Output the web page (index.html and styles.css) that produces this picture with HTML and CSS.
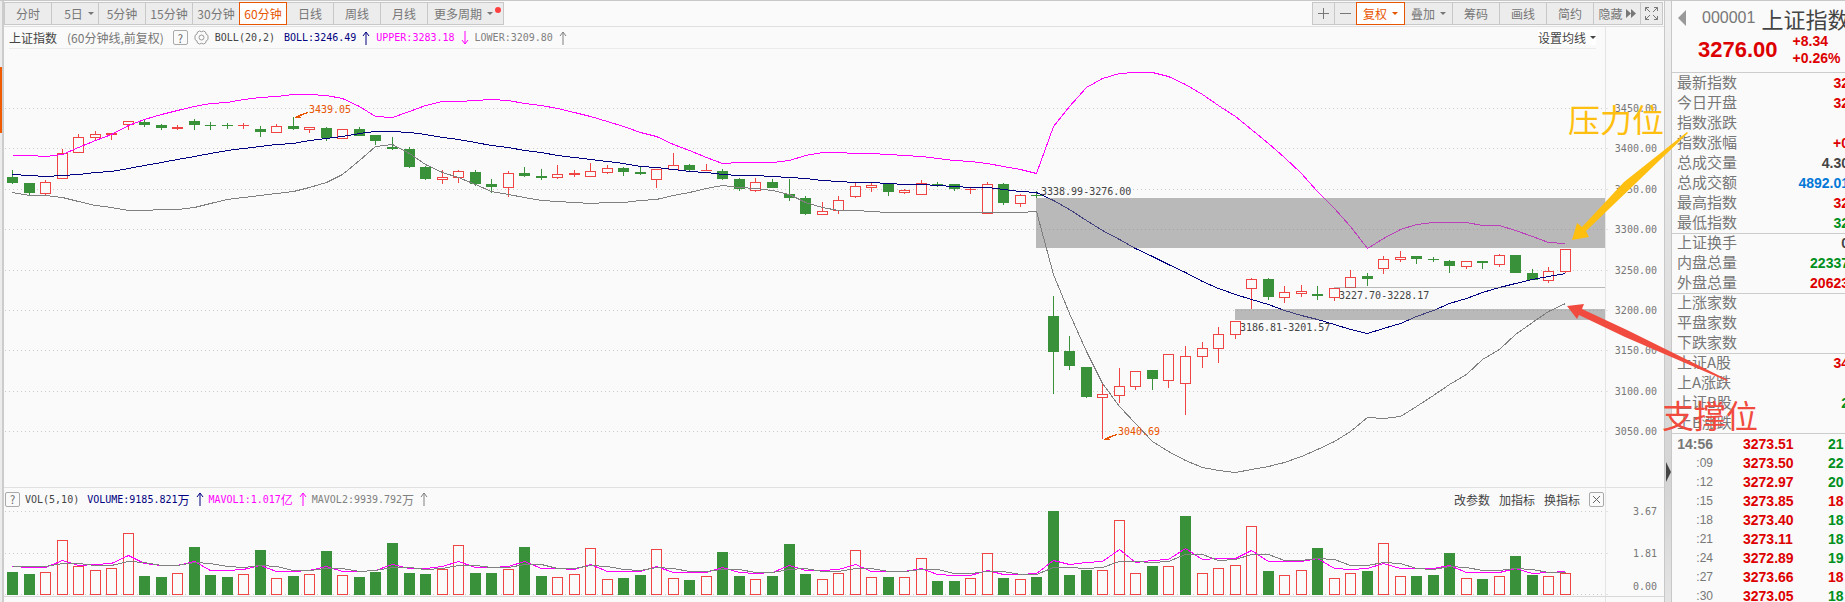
FILE: index.html
```html
<!DOCTYPE html>
<html lang="zh-CN">
<head>
  <meta charset="UTF-8">
  <meta name="viewport" content="width=device-width, initial-scale=1.0">
  <title>上证指数 60分钟线</title>
  <link rel="stylesheet" href="styles.css">
</head>
<body>
  <div class="app">
    <div class="strip"><div class="strip-active"></div></div>

    <main class="main">
      <div class="toolbar">
        <div class="tabs">
          <button type="button">分时</button>
          <button type="button" class="days">5日<i class="caret"></i></button>
          <button type="button">5分钟</button>
          <button type="button">15分钟</button>
          <button type="button">30分钟</button>
          <button type="button" class="active">60分钟</button>
          <button type="button">日线</button>
          <button type="button">周线</button>
          <button type="button">月线</button>
          <button type="button" class="more">更多周期<i class="caret"></i><i class="dot"></i></button>
        </div>
        <div class="tabs">
          <button type="button" class="icon" aria-label="放大"><svg width="13" height="13"><path d="M1 6.5H12M6.5 1V12"/></svg></button>
          <button type="button" class="icon" aria-label="缩小"><svg width="13" height="13"><path d="M1 6.5H12"/></svg></button>
          <button type="button" class="active wide">复权<i class="caret"></i></button>
          <button type="button" class="wide">叠加<i class="caret"></i></button>
          <button type="button">筹码</button>
          <button type="button">画线</button>
          <button type="button">简约</button>
          <button type="button" class="hide">隐藏<svg width="10" height="9"><path class="solid" d="M0 0L5 4.5L0 9ZM5 0L10 4.5L5 9Z"/></svg></button>
          <button type="button" class="icon" aria-label="全屏"><svg width="13" height="13"><path d="M.5 4V.5H4M.5 .5L5 5M9 .5H12.500V4M12.500 .5L8 5M.5 9V12.500H4M.5 12.500L5 8M9 12.500H12.500V9M12.500 12.500L8 8"/></svg></button>
        </div>
      </div>

      <section class="pane price">
        <div class="info">
          <div class="legend underlined">
            <span class="name">上证指数</span>
            <span class="period">(60分钟线,前复权)</span>
            <button type="button" class="box">?</button>
            <svg class="gear" width="15" height="15"><path d="M5.500 1Q7.500 2.500 9.500 1L11.500 2Q11.500 4.500 14 5.500V9.500Q11.500 10.500 11.500 13L9.500 14Q7.500 12.500 5.500 14L3.500 13Q3.500 10.500 1 9.500V5.500Q3.500 4.500 3.500 2Z"/><circle cx="7.5" cy="7.5" r="2.5"/></svg>
            <span class="num dark">BOLL(20,2)</span>
            <span class="num navy">BOLL:3246.49<svg width="8" height="14"><path d="M4 1V14M1 5L4 1L7 5"/></svg></span>
            <span class="num pink">UPPER:3283.18<svg width="8" height="14"><path d="M4 0V13M1 9L4 13L7 9"/></svg></span>
            <span class="num gray">LOWER:3209.80<svg width="8" height="14"><path d="M4 1V14M1 5L4 1L7 5"/></svg></span>
            <button type="button" class="setting">设置均线<i class="caret"></i></button>
          </div>
        </div>
        <svg id="price" class="plot"></svg>
      </section>

      <section class="pane volume">
        <div class="info">
          <div class="legend">
            <button type="button" class="box">?</button>
            <span class="num dark">VOL(5,10)</span>
            <span class="num navy">VOLUME:9185.821<b>万</b><svg width="8" height="14"><path d="M4 1V14M1 5L4 1L7 5"/></svg></span>
            <span class="num pink">MAVOL1:1.017<b>亿</b><svg width="8" height="14"><path d="M4 1V14M1 5L4 1L7 5"/></svg></span>
            <span class="num gray">MAVOL2:9939.792<b>万</b><svg width="8" height="14"><path d="M4 1V14M1 5L4 1L7 5"/></svg></span>
            <div class="actions">
              <a href="#">改参数</a>
              <a href="#">加指标</a>
              <a href="#">换指标</a>
              <button type="button" class="box" aria-label="关闭"><svg width="9" height="9"><path d="M1 1L8 8M8 1L1 8"/></svg></button>
            </div>
          </div>
        </div>
        <svg id="volume" class="plot"></svg>
      </section>

      <section class="pane next">
        <div class="info">
          <div class="legend">
            <button type="button" class="box" aria-label="说明"></button>
            <div class="actions"><button type="button" class="box" aria-label="关闭"></button></div>
          </div>
        </div>
      </section>
    </main>

    <div class="splitter"><svg width="5" height="20"><path d="M0 0L5 10L0 20Z"/></svg></div>

    <aside class="quote">
      <header>
        <div class="title">
          <svg width="8" height="16"><path d="M8 0V16L0 8Z"/></svg>
          <span class="code">000001</span>
          <span class="stock">上证指数</span>
        </div>
        <div class="last">
          <strong>3276.00</strong>
          <div class="change"><div>+8.34</div><div>+0.26%</div></div>
        </div>
      </header>
      <dl>
        <div><dt>最新指数</dt><dd class="up">32</dd></div>
        <div><dt>今日开盘</dt><dd class="up">32</dd></div>
        <div><dt>指数涨跌</dt><dd></dd></div>
        <div><dt>指数涨幅</dt><dd class="up">+0</dd></div>
        <div><dt>总成交量</dt><dd>4.30</dd></div>
        <div><dt>总成交额</dt><dd class="blue">4892.01</dd></div>
        <div><dt>最高指数</dt><dd class="up">32</dd></div>
        <div><dt>最低指数</dt><dd class="down">32</dd></div>
      </dl>
      <dl>
        <div><dt>上证换手</dt><dd>0</dd></div>
        <div><dt>内盘总量</dt><dd class="down">22337</dd></div>
        <div><dt>外盘总量</dt><dd class="up">20623</dd></div>
      </dl>
      <dl>
        <div><dt>上涨家数</dt><dd></dd></div>
        <div><dt>平盘家数</dt><dd></dd></div>
        <div><dt>下跌家数</dt><dd></dd></div>
      </dl>
      <dl>
        <div><dt>上证A股</dt><dd class="up">34</dd></div>
        <div><dt>上A涨跌</dt><dd></dd></div>
        <div><dt>上证B股</dt><dd class="down">2</dd></div>
        <div><dt>上B涨跌</dt><dd></dd></div>
      </dl>
      <table>
        <tr><th>14:56</th><td class="up">3273.51</td><td class="down">21</td></tr>
        <tr><td>:09</td><td class="up">3273.50</td><td class="down">22</td></tr>
        <tr><td>:12</td><td class="up">3272.97</td><td class="down">20</td></tr>
        <tr><td>:15</td><td class="up">3273.85</td><td class="up">18</td></tr>
        <tr><td>:18</td><td class="up">3273.40</td><td class="down">18</td></tr>
        <tr><td>:21</td><td class="up">3273.11</td><td class="down">18</td></tr>
        <tr><td>:24</td><td class="up">3272.89</td><td class="down">19</td></tr>
        <tr><td>:27</td><td class="up">3273.66</td><td class="up">18</td></tr>
        <tr><td>:30</td><td class="up">3273.05</td><td class="down">18</td></tr>
      </table>
    </aside>

    <!-- hand drawn notes over the chart -->
    <svg class="notes" width="300" height="450">
      <polygon class="yellow" points="27,240 32,223 37,227 79,182 142,132 143,133 91,183 41,231 44,237"/>
      <text class="yellow" x="23" y="132">压力位</text>
      <polygon class="red" points="22,306 39,304 37,309 82,330 183,380 182,381 80,337 34,315 32,319"/>
      <text class="red" x="117" y="428">支撑位</text>
    </svg>
  </div>

  <script src="chart.js"></script>
</body>
</html>
```

FILE: styles.css
```css
* {
  box-sizing: border-box;
}

body {
  margin: 0;
  background: #fafafa;
  color: #444;
  font-family: "Noto Sans CJK SC", sans-serif;
  font-size: 12px;
}

.app {
  display: flex;
  position: relative;
  height: 100vh;
  overflow: hidden;
  border-top: 1px solid #c8c8c8;
}

button {
  font: inherit;
  color: inherit;
  padding: 0;
  cursor: pointer;
}

svg {
  display: block;
  flex-shrink: 0;
  fill: none;
  stroke: currentColor;
}

/* Left strip */
.strip {
  flex: 0 0 4px;
  padding-top: 66px;
  background: #ececec;
  border-right: 2px solid #ccc;
}

.strip-active {
  height: 66px;
  background: #f05a00;
}

/* Chart column */
.main {
  flex: 1;
  min-width: 0;
  display: flex;
  flex-direction: column;
}

.toolbar {
  display: flex;
  justify-content: space-between;
  height: 26px;
  padding: 1px 1px 0 0;
  border-bottom: 1px solid #e0e0e0;
}

.tabs {
  display: flex;
}

.tabs button {
  display: flex;
  align-items: center;
  justify-content: center;
  gap: 5px;
  position: relative;
  width: 48px;
  height: 23px;
  margin-right: -1px;
  border: 1px solid #c8c8c8;
  background: #ececec;
  color: #777;
}

.tabs button:last-child {
  margin-right: 0;
}

.tabs .days {
  padding-left: 8px;
}

.tabs .more {
  width: 77px;
  padding-right: 4px;
}

.tabs .icon {
  width: 23px;
}

.tabs .wide {
  width: 49px;
}

.tabs .hide {
  gap: 3px;
}

.tabs .active {
  z-index: 1;
  border-color: #e85500;
  background: #fff;
  color: #e85500;
}

.solid {
  fill: currentColor;
  stroke: none;
}

.caret {
  border: 3px solid transparent;
  border-top-color: currentColor;
  border-bottom: 0;
}

.dot {
  position: absolute;
  top: 4px;
  right: 2px;
  width: 6px;
  height: 6px;
  border-radius: 50%;
  background: #ff4040;
}

.pane {
  display: flex;
  flex-direction: column;
  min-height: 0;
}

.price {
  flex: 1;
}

.volume {
  flex: 0 0 109px;
  border-top: 1px solid #e0e0e0;
}

.next {
  flex: 0 0 6px;
  overflow: hidden;
  border-top: 1px solid #d8d8d8;
}

.info {
  flex: 0 0 22px;
  margin-right: 58px;
  border-right: 1px solid #e4e4e4;
}

.legend {
  display: flex;
  align-items: center;
  gap: 6px;
  height: 22px;
  margin: 0 1px;
  white-space: nowrap;
}

.underlined {
  margin: 0 9px 0 5px;
  border-bottom: 1px solid #ebebeb;
}

.volume .legend {
  gap: 5px;
}

.next .legend {
  height: 24px;
}

.period {
  margin: 0 3px 0 4px;
  color: #777;
}

.box {
  display: flex;
  align-items: center;
  justify-content: center;
  width: 15px;
  height: 15px;
  border: 1px solid #aaa;
  border-radius: 2px;
  background: #fafafa;
  color: #666;
  font-size: 11px;
}

.gear {
  color: #999;
}

.num {
  display: flex;
  align-items: center;
  gap: 6px;
  font-family: "DejaVu Sans Mono", "Noto Sans CJK SC", monospace;
  font-size: 10px;
}

.num b {
  margin-left: -6px;
  font-size: 12px;
  font-weight: normal;
}

.dark {
  margin-right: 3px;
  color: #444;
}

.navy {
  color: #000080;
}

.pink {
  color: #f0f;
}

.gray {
  color: #808080;
}

.setting {
  display: flex;
  align-items: center;
  gap: 4px;
  height: 15px;
  margin-left: auto;
  border: 0;
  background: #fff;
  color: #444;
}

.actions {
  display: flex;
  align-items: center;
  gap: 9px;
  margin-left: auto;
}

.actions a {
  color: #444;
  text-decoration: none;
}

.plot {
  flex: 1 1 0;
  width: 100%;
  height: 0;
  min-height: 0;
  overflow: visible;
  shape-rendering: crispEdges;
}

.grid {
  stroke: #ccc;
  stroke-dasharray: 1 3;
}

.axis {
  stroke: #e4e4e4;
}

.rise {
  fill: #fafafa;
  stroke: #ee4444;
}

.fall {
  fill: #39913a;
  stroke: #39913a;
}

.band {
  fill: #7c7c7c;
  fill-opacity: 0.52;
  stroke: none;
}

.line-pink {
  stroke: #f0f;
}

.line-navy {
  stroke: #000080;
}

.line-gray {
  stroke: #808080;
}

.plot text {
  fill: #777;
  stroke: none;
  font-family: "DejaVu Sans Mono", monospace;
  font-size: 10px;
}

.plot .gap-label {
  fill: #444;
}

.plot .mark {
  fill: #e85500;
}

.mark-arrow {
  fill: #e85500;
  stroke: #e85500;
}

/* Splitter */
.splitter {
  flex: 0 0 8px;
  display: flex;
  align-items: center;
  padding: 340px 0 0 1px;
  border: 1px solid #c8c8c8;
  border-width: 0 1px;
  background: linear-gradient(#f0f0f0, #d4d4d4 80%, #e4e4e4);
}

.splitter path {
  fill: #444;
  stroke: none;
}

/* Quote panel */
.quote {
  flex: 0 0 173px;
  overflow: hidden;
  white-space: nowrap;
  font-size: 15px;
  color: #777;
}

.quote header {
  height: 72px;
  border-bottom: 1px solid #ccc;
}

.title {
  display: flex;
  align-items: center;
  height: 34px;
  padding-left: 6px;
}

.title path {
  fill: #999;
  stroke: none;
}

.code {
  margin: 0 6px 0 16px;
  font: 16px "Liberation Sans", sans-serif;
}

.stock {
  font-size: 22px;
  line-height: 30px;
  color: #444;
}

.last {
  display: flex;
  gap: 15px;
  padding-left: 26px;
  font-family: "Liberation Sans", sans-serif;
  color: #d00;
}

.last strong {
  font-size: 22px;
  line-height: 30px;
}

.change {
  margin-top: -2px;
  font-size: 14px;
  font-weight: bold;
  line-height: 17px;
}

dl {
  margin: 0 -4px -1px 0;
  border-bottom: 1px solid #ccc;
}

dl div {
  display: flex;
  justify-content: space-between;
  height: 20px;
  padding-left: 5px;
  line-height: 18px;
}

dd {
  margin: 0;
  color: #444;
  font: bold 14px/20px "Liberation Sans", sans-serif;
}

.quote .up {
  color: #d00;
}

.quote .down {
  color: #009020;
}

.quote .blue {
  color: #0078d7;
}

table {
  width: 100%;
  margin-top: 2px;
  border-collapse: collapse;
  table-layout: fixed;
  font: bold 14px/19px "Liberation Sans", sans-serif;
}

th,
td {
  height: 19px;
  padding: 0;
}

th:first-child,
td:first-child {
  width: 41px;
  text-align: right;
}

td:first-child {
  font-size: 12px;
  font-weight: normal;
}

td:nth-child(2) {
  width: 115px;
  padding-left: 30px;
}

/* Notes */
.notes {
  position: absolute;
  top: -1px;
  right: 0;
  pointer-events: none;
  stroke: none;
  font-size: 32px;
}

.yellow {
  fill: #ffbf10;
}

.red {
  fill: #f04b3e;
}
```

FILE: chart.js
```js
// one row per bar: up(1)/down(0), body top, body bottom, high, low, volume height
const bars = [
  [0,177,183,170,184,23], [0,183,193,183,195,21], [1,182,194,180,195,23], [1,153,179,149,179,55],
  [1,137,153,134,153,29], [1,134,138,131,140,25], [1,133,135,133,140,27], [1,121,125,121,130,62],
  [0,122,125,119,127,19], [0,125,128,124,130,18], [1,127,129,125,130,22], [0,121,125,119,130,48],
  [0,125,126,122,130,20], [0,125,126,123,129,18], [1,125,126,123,129,21], [0,129,132,126,137,45],
  [1,126,133,124,133,17], [0,126,129,117,130,19], [1,127,130,127,133,21], [0,128,138,127,141,44],
  [1,129,139,129,139,20], [0,129,136,127,136,18], [0,135,141,135,145,23], [0,147,149,137,150,52],
  [0,149,167,147,168,22], [0,167,179,166,180,21], [1,177,180,170,184,26], [1,171,178,170,183,50],
  [0,172,184,170,186,22], [0,184,187,179,193,22], [1,173,188,171,197,26], [0,173,176,167,177,48],
  [0,176,178,169,180,19], [1,174,178,165,179,18], [1,173,175,170,177,21], [1,171,177,163,177,47],
  [1,168,173,165,174,16], [0,168,172,167,176,17], [0,172,174,167,175,20], [1,169,180,169,188,46],
  [1,165,170,153,170,17], [0,165,170,164,171,15], [1,170,171,164,171,19], [0,171,179,169,180,43],
  [0,179,189,178,191,19], [1,182,191,178,192,16], [0,182,188,179,188,19], [0,194,198,179,201,51],
  [0,198,214,196,215,21], [1,211,215,202,215,16], [1,200,211,196,214,22], [1,186,197,183,198,45],
  [1,185,188,183,192,18], [0,184,192,184,196,18], [1,190,193,189,194,18], [1,183,195,180,195,37],
  [0,184,185,182,187,14], [0,184,189,184,191,14], [1,189,190,187,194,17], [1,184,214,182,214,42],
  [0,184,203,183,205,17], [1,195,204,194,207,16], [0,195,196,191,198,18], [0,316,352,296,394,84],
  [0,351,366,336,370,20], [0,367,397,367,398,25], [1,394,398,382,439,25], [1,386,396,368,403,75],
  [1,371,387,371,390,22], [0,370,379,370,390,29], [1,354,381,354,388,29], [0,356,384,346,415,79],
  [1,348,357,342,368,22], [1,334,349,327,363,27], [1,321,335,321,339,30], [1,279,289,278,309,69],
  [0,279,297,278,300,24], [1,292,298,286,303,20], [1,291,294,285,297,25], [0,294,296,286,300,47],
  [1,288,298,288,301,17], [1,277,288,270,288,22], [0,276,279,273,286,24], [1,259,269,256,274,52],
  [1,257,260,251,262,19], [0,256,259,256,264,19], [0,259,260,257,262,20], [0,261,266,260,273,42],
  [1,261,267,261,269,17], [0,261,263,261,269,16], [1,255,265,254,267,19], [0,255,273,255,273,39],
  [0,273,280,269,280,20], [1,271,281,267,283,19], [1,249,272,249,273,22]
];
// bar 71 closed up on price, its volume bar is painted green
const risingPrice = [71];

// volumes before the first visible bar, needed for the averages
const history = [25, 25, 25, 25, 50, 22, 23, 24, 51];

const upper = [155,155,156,154,147,140,134,125,119,114,110,106,103,102,99,97,96,94,94,95,98,106,116,117,111,105,101,101,100,99,100,103,105,108,112,116,121,126,132,136,144,150,157,163,162,162,162,160,155,152,152,153,153,154,155,156,158,160,161,163,166,169,173,126,106,87,78,73,72,72,76,84,94,105,116,129,143,157,173,191,208,226,248,238,229,224,222,222,222,225,225,230,236,242,243];
const mid = [174,175,176,175,174,172,171,168,165,162,159,156,153,150,148,146,144,143,140,138,136,133,131,131,132,134,137,139,142,145,147,150,152,155,157,159,161,163,166,167,169,171,172,174,175,175,176,177,178,180,181,182,182,183,184,184,185,186,187,187,189,191,192,200,209,220,230,239,248,256,264,272,281,288,294,299,304,310,315,319,324,329,333,328,323,316,310,303,298,292,287,283,279,276,273];
const lower = [192,195,195,197,201,205,207,210,210,209,209,207,203,199,197,195,193,191,187,182,174,160,146,144,153,164,172,177,184,191,194,197,200,201,202,203,202,202,200,199,195,192,188,185,187,188,190,194,202,207,210,210,211,212,212,212,212,212,212,212,212,212,211,274,313,351,383,406,423,441,451,460,467,470,472,469,466,462,456,449,441,431,417,418,416,406,395,384,374,359,349,334,322,311,303];

const AXIS = 59;

function average(n) {
  const all = history.concat(bars.map(b => b[5]));
  return bars.map((b, i) => {
    const end = i + history.length + 1;
    return all.slice(end - n, end).reduce((a, v) => a + v, 0) / n;
  });
}

function drawPrice() {
  const svg = document.getElementById("price");
  const w = svg.clientWidth, h = svg.clientHeight;
  const plot = w - AXIS;
  const x = i => Math.round(8 + i * (plot - 48) / 94);
  const y = v => Math.round((v - 49) * h / 438);
  const line = (data, cls) => `<polyline class="${cls}" points="${data.map((v, i) => (x(i) + 0.5) + "," + (y(v) + 0.5)).join(" ")}"/>`;
  let out = "";

  for (let p = 3450; p >= 3050; p -= 50) {
    const gy = y(108 + (3450 - p) * 0.8075) + 0.5;
    out += `<path class="grid" d="M1 ${gy}H${plot}"/><path class="axis" d="M${plot} ${gy}h3"/>`;
    out += `<text x="${w - 7}" y="${gy + 3}" text-anchor="end">${p}.00</text>`;
  }
  out += `<path class="axis" d="M${plot + 0.5} 0V${h}"/>`;

  bars.forEach((b, i) => {
    const up = b[0] || risingPrice.includes(i);
    const cx = x(i), top = y(b[1]), bottom = Math.max(y(b[2]), top + 1);
    out += `<g class="${up ? "rise" : "fall"}"><path d="M${cx + 0.5} ${y(b[3])}V${top}M${cx + 0.5} ${bottom}V${y(b[4])}"/>`;
    if (bottom - top > 1) {
      out += `<rect x="${cx - 4.5}" y="${top + 0.5}" width="10" height="${bottom - top - 1}"/></g>`;
    } else {
      out += `<path d="M${cx - 5} ${top + 0.5}h11M${cx + 0.5} ${top}v1"/></g>`;
    }
  });

  out += line(upper, "line-pink") + line(mid, "line-navy") + line(lower, "line-gray");

  // unfilled gaps
  [[62, 198, 248], [74, 309, 320], [80, 287, 288]].forEach(g => {
    out += `<rect class="band" x="${x(g[0])}" y="${y(g[1])}" width="${plot - x(g[0])}" height="${y(g[2]) - y(g[1])}"/>`;
  });
  out += `<text class="gap-label" x="${x(62) + 5}" y="${y(195)}">3338.99-3276.00</text>`;
  out += `<text class="gap-label" x="${x(74) + 5}" y="${y(331)}">3186.81-3201.57</text>`;
  out += `<text class="gap-label" x="${x(80) + 5}" y="${y(299)}">3227.70-3228.17</text>`;

  // highest and lowest price
  [[17, 117, 113, "3439.05"], [66, 439, 435, "3040.69"]].forEach(m => {
    const mx = x(m[0]) + 2, my = y(m[1]) + 0.5;
    out += `<path class="mark-arrow" d="M${mx} ${my}l13 -5l-9 3l1 2z"/>`;
    out += `<text class="mark" x="${mx + 14}" y="${y(m[2])}">${m[3]}</text>`;
  });
  svg.innerHTML = out;
}

function drawVolume() {
  const svg = document.getElementById("volume");
  const w = svg.clientWidth, h = svg.clientHeight;
  const plot = w - AXIS;
  const base = h - 1;
  const x = i => Math.round(8 + i * (plot - 48) / 94);
  let out = "";

  [[84, "3.67", 3], [42, "1.81", 3], [1, "0.00", -5]].forEach(g => {
    const gy = base - g[0] + 0.5;
    out += `<path class="grid" d="M1 ${gy}H${plot}"/><path class="axis" d="M${plot} ${gy}h3"/>`;
    out += `<text x="${w - 7}" y="${gy + g[2]}" text-anchor="end">${g[1]}</text>`;
  });
  out += `<path class="axis" d="M${plot + 0.5} 0V${h}"/>`;

  bars.forEach((b, i) => {
    out += `<rect class="${b[0] ? "rise" : "fall"}" x="${x(i) - 4.5}" y="${base - b[5] + 0.5}" width="10" height="${b[5] - 1}"/>`;
  });

  [[5, "line-pink"], [10, "line-gray"]].forEach(m => {
    const points = average(m[0]).map((v, i) => (x(i) + 0.5) + "," + (Math.round(base - v) + 0.5));
    out += `<polyline class="${m[1]}" points="${points.join(" ")}"/>`;
  });
  svg.innerHTML = out;
}

function draw() {
  drawPrice();
  drawVolume();
}

draw();
window.addEventListener("resize", draw);
```
